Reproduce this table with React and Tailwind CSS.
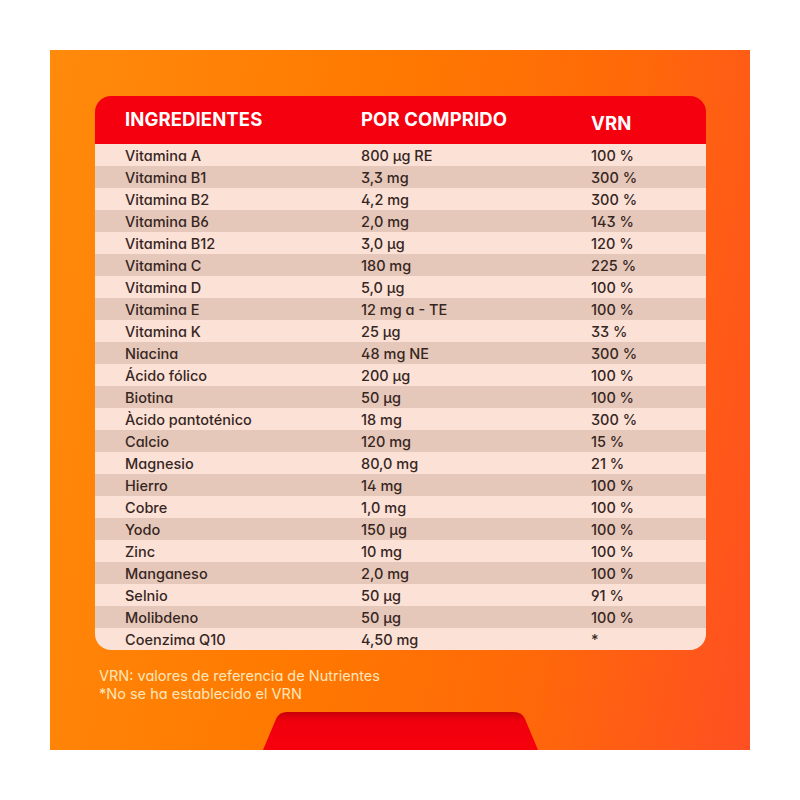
import React from "react";

const rows = [
  ["Vitamina A", "800 µg RE", "100 %"],
  ["Vitamina B1", "3,3 mg", "300 %"],
  ["Vitamina B2", "4,2 mg", "300 %"],
  ["Vitamina B6", "2,0 mg", "143 %"],
  ["Vitamina B12", "3,0 µg", "120 %"],
  ["Vitamina C", "180 mg", "225 %"],
  ["Vitamina D", "5,0 µg", "100 %"],
  ["Vitamina E", "12 mg ɑ - TE", "100 %"],
  ["Vitamina K", "25 µg", "33 %"],
  ["Niacina", "48 mg NE", "300 %"],
  ["Ácido fólico", "200 µg", "100 %"],
  ["Biotina", "50 µg", "100 %"],
  ["Àcido pantoténico", "18 mg", "300 %"],
  ["Calcio", "120 mg", "15 %"],
  ["Magnesio", "80,0 mg", "21 %"],
  ["Hierro", "14 mg", "100 %"],
  ["Cobre", "1,0 mg", "100 %"],
  ["Yodo", "150 µg", "100 %"],
  ["Zinc", "10 mg", "100 %"],
  ["Manganeso", "2,0 mg", "100 %"],
  ["Selnio", "50 µg", "91 %"],
  ["Molibdeno", "50 µg", "100 %"],
  ["Coenzima Q10", "4,50 mg", "*"],
];

const font = "font-['Inter','Noto_Sans',sans-serif] [font-feature-settings:'cv11','ss01']";

const App = () => {
  return (
    <div className={`w-[800px] h-[800px] bg-white p-[50px] ${font}`}>
      <div className="w-[700px] h-[700px] flex flex-col bg-[linear-gradient(100deg,#ff8a0c_0%,#ff7a00_40%,#ff6a08_70%,#ff4f22_100%)]">
        {/* Table */}
        <div className="ml-[45px] mt-[46px] w-[611px] rounded-[16px] overflow-hidden">
          <div className="h-[48px] bg-[#f5000f] grid grid-cols-[236px_230px_1fr] pl-[30px] items-center text-white font-bold text-[18.5px] tracking-[0.1px]">
            <span>INGREDIENTES</span>
            <span>POR COMPRIDO</span>
            <span className="mt-[7px]">VRN</span>
          </div>
          {rows.map((r, i) => (
            <div
              key={i}
              className={`h-[22px] grid grid-cols-[236px_230px_1fr] pl-[30px] pt-[1px] items-center text-[14.5px] font-medium text-[#36261f] ${
                i % 2 === 0 ? "bg-[#fbe1d6]" : "bg-[#e6c8ba]"
              }`}
            >
              <span>{r[0]}</span>
              <span>{r[1]}</span>
              <span>{r[2]}</span>
            </div>
          ))}
        </div>

        {/* Footnotes */}
        <div className="ml-[49px] mt-[17px] text-[14.5px] leading-[18px] text-[#ffe6ba]">
          <p>VRN: valores de referencia de Nutrientes</p>
          <p>*No se ha establecido el VRN</p>
        </div>

        {/* Red tab */}
        <div className="mt-auto ml-[213px] h-[38px]">
          <svg width="275" height="38" viewBox="0 0 275 38">
            <defs>
              <linearGradient id="tab" x1="0" y1="0" x2="0" y2="1">
                <stop offset="0" stopColor="#c8000a" />
                <stop offset="0.25" stopColor="#f0000c" />
                <stop offset="1" stopColor="#f7000e" />
              </linearGradient>
            </defs>
            <path d="M0 38 L13 7 Q16 0 24 0 L251 0 Q259 0 262 7 L275 38 Z" fill="url(#tab)" />
          </svg>
        </div>
      </div>
    </div>
  );
};

export default App;
